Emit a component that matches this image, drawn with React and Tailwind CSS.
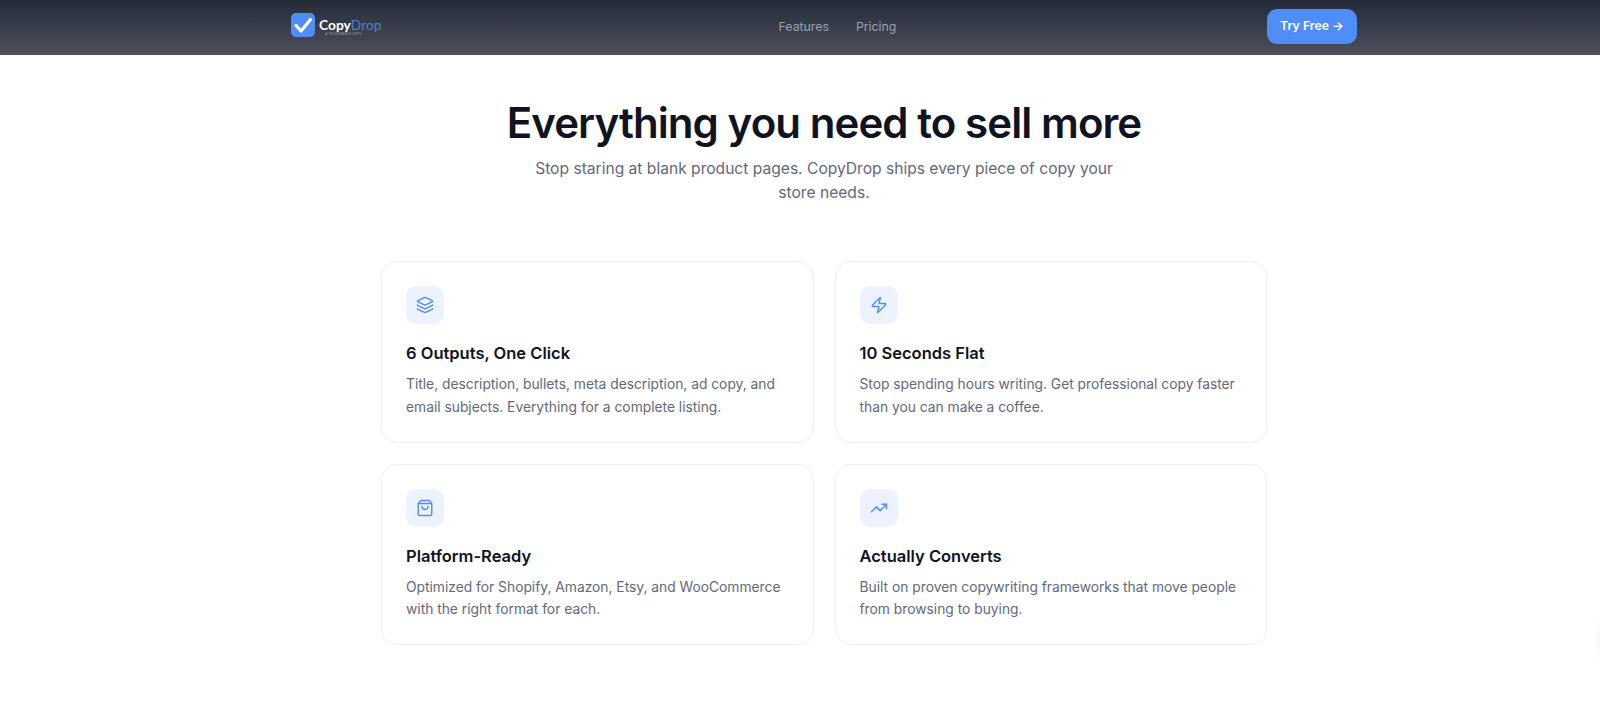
import React from "react";
import { Layers, Zap, ShoppingBag, TrendingUp } from "lucide-react";

const features = [
  {
    icon: Layers,
    title: "6 Outputs, One Click",
    text: "Title, description, bullets, meta description, ad copy, and email subjects. Everything for a complete listing.",
  },
  {
    icon: Zap,
    title: "10 Seconds Flat",
    text: "Stop spending hours writing. Get professional copy faster than you can make a coffee.",
  },
  {
    icon: ShoppingBag,
    title: "Platform-Ready",
    text: "Optimized for Shopify, Amazon, Etsy, and WooCommerce with the right format for each.",
  },
  {
    icon: TrendingUp,
    title: "Actually Converts",
    text: "Built on proven copywriting frameworks that move people from browsing to buying.",
  },
];

const Logo = () => (
  <div className="w-[116px] pb-[4px] flex items-center gap-1">
    <div className="w-6 h-6 shrink-0 rounded-[5px] bg-[#4f8df7] flex items-center justify-center">
      <svg viewBox="0 0 24 24" className="w-6 h-6" fill="none" stroke="white" strokeWidth="3.2" strokeLinecap="round" strokeLinejoin="round">
        <path d="M5 12.5l5 5.5L19.5 6.5" />
      </svg>
    </div>
    <div className="relative text-[13.8px] font-bold leading-none whitespace-nowrap font-['Lato',sans-serif]">
      <span className="text-white">Copy</span>
      <span className="text-[#4a7fd8] font-normal">Drop</span>
      <span className="absolute left-[6px] top-[15px] text-[3px] leading-none tracking-[0.3px] text-[#8b909c]">AI ECOMMERCE COPY</span>
    </div>
  </div>
);

const Header = () => {
  return (
    <nav className="h-[55px] bg-gradient-to-b from-[#262b3a] to-[#4d515c]">
      <div className="w-[1066px] mx-auto h-[54px] flex items-center justify-between">
        <Logo />
        <div className="flex items-center gap-[27px] pl-[1px] text-[12.3px] text-[#9aa1b3]">
          <a>Features</a>
          <a>Pricing</a>
        </div>
        <button className="h-[35px] w-[90px] mb-[1px] rounded-[10px] bg-[#4f8df7] text-white text-[12.3px] font-semibold">
          Try Free →
        </button>
      </div>
    </nav>
  );
};

const Card = ({ icon: Icon, title, text }) => (
  <div className="border border-[#eceef1] rounded-2xl px-6 pt-6 pb-[23px] bg-white">
    <div className="w-[38px] h-[38px] rounded-[10px] bg-[#edf3fe] flex items-center justify-center">
      <Icon className="w-[18px] h-[18px] text-[#4f8df7]" strokeWidth={1.9} />
    </div>
    <h3 className="mt-[17px] text-[16.5px] font-semibold leading-6 text-[#0f1322]">{title}</h3>
    <p className="mt-[8px] text-[13.8px] leading-[22.8px] text-[#636978]">{text}</p>
  </div>
);

export default function App() {
  return (
    <div className="relative w-full h-[726px] overflow-hidden bg-white font-['Inter',sans-serif]">
      <div className="w-[1648px]">
        <Header />
        <section className="pt-[45px] flex flex-col items-center">
          <h1 className="text-[42px] font-semibold leading-[46px] tracking-[-0.92px] text-[#0f1322]">
            Everything you need to sell more
          </h1>
          <p className="mt-[11px] w-[600px] text-center text-[15.6px] leading-[23.5px] text-[#636978]">
            Stop staring at blank product pages. CopyDrop ships every piece of copy your store needs.
          </p>
          <div className="mt-[57px] w-[886px] grid grid-cols-2 gap-[21px]">
            {features.map((f) => (
              <Card key={f.title} {...f} />
            ))}
          </div>
        </section>
      </div>
      <div className="absolute left-[1606px] top-[612px] w-12 h-12 rounded-full bg-white shadow-[0_4px_16px_rgba(0,0,0,0.18)]" />
    </div>
  );
}
